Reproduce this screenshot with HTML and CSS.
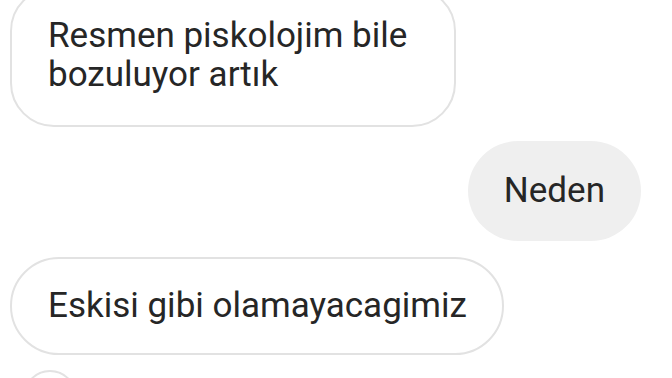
FILE: index.html
```html
<!DOCTYPE html>
<html lang="tr">
<head>
<meta charset="utf-8">
<link rel="stylesheet" href="styles.css">
</head>
<body>
<div class="thread">
  <div class="msg in multi">Resmen piskolojim bile bozuluyor artık</div>
  <div class="msg out">Neden</div>
  <div class="msg in single">Eskisi gibi olamayacagimiz</div>
  <div class="reaction"></div>
</div>
</body>
</html>
```
FILE: styles.css
```css
html, body {
  margin: 0;
  padding: 0;
  background: #ffffff;
  height: 378px;
  overflow: hidden;
}
.thread {
  box-sizing: border-box;
  height: 391px;
  overflow: hidden;
  display: flex;
  flex-direction: column;
  align-items: flex-start;
  margin-top: -13px;
  padding: 0 31px 0 10px;
  font-family: Roboto, "Noto Sans", sans-serif;
  font-size: 35px;
  line-height: 38px;
  color: #262626;
}
.msg {
  box-sizing: border-box;
  width: fit-content;
  flex-shrink: 0;
}
.in {
  border: 2px solid #e2e2e2;
  background: #ffffff;
}
.multi {
  width: 446px;
  line-height: 39px;
  padding: 27px 36px 31px 36px;
  border-radius: 44px;
}
.out {
  align-self: flex-end;
  margin-top: 14px;
  background: #efefef;
  padding: 31px 36px;
  border-radius: 50px;
}
.single {
  margin-top: 16px;
  padding: 28px 35px 28px 36px;
  border-radius: 49px;
}
.reaction {
  flex-shrink: 0;
  margin-top: 15px;
  margin-left: 13px;
  width: 54px;
  height: 54px;
  box-sizing: border-box;
  border: 2px solid #e2e2e2;
  border-radius: 50%;
}
```
